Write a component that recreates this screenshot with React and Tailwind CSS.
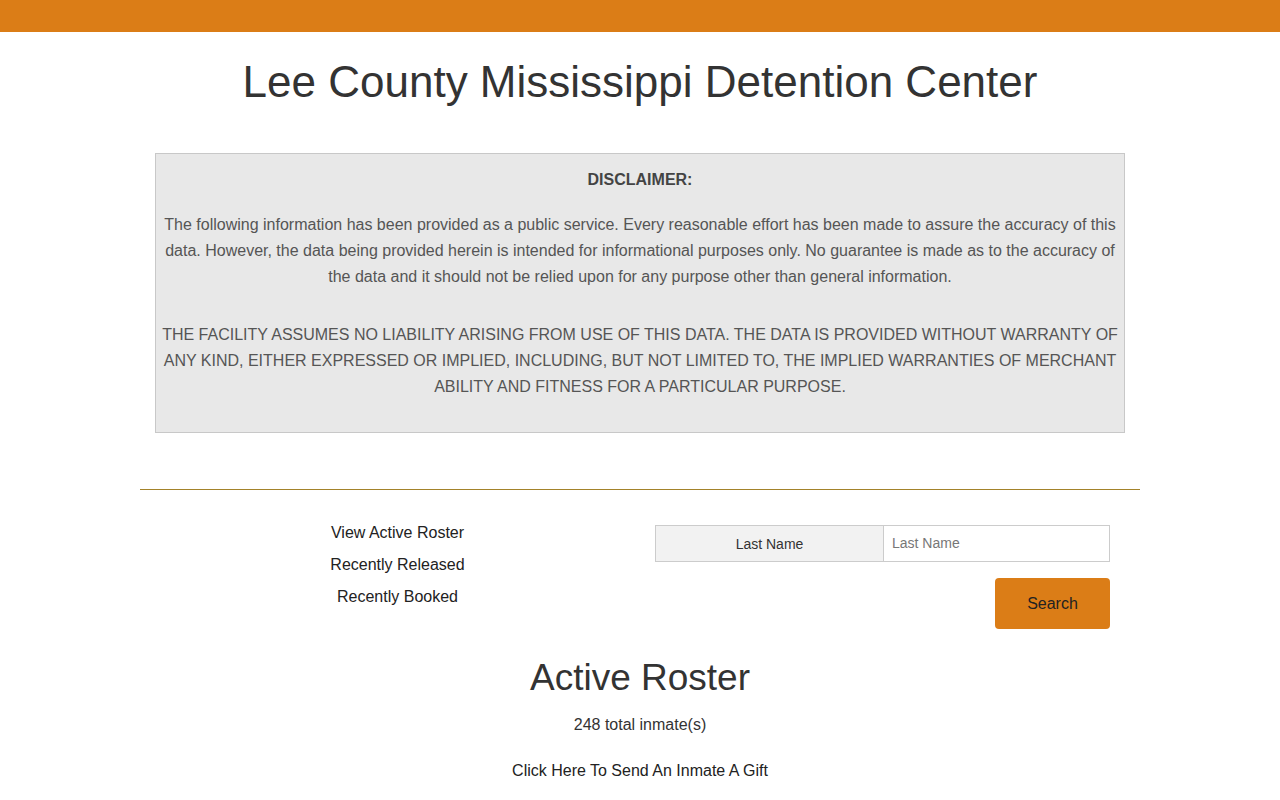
import React from "react";

export default function App() {
  const links = ["View Active Roster", "Recently Released", "Recently Booked"];

  return (
    <div className="min-h-screen bg-white text-[#333] font-['Liberation_Sans',Arial,sans-serif]">
      {/* top bar */}
      <div className="h-8 bg-[#db7d17]" />

      {/* title */}
      <h1 className="text-center text-[44px] leading-[50px] pt-[25px] text-[#333]">
        Lee County Mississippi Detention Center
      </h1>

      {/* disclaimer */}
      <div className="mx-auto mt-[46px] w-[970px] border border-[#c8c8c8] bg-[#e8e8e8] px-[5px] pt-[13px] pb-[32px] text-center text-base leading-[26px] text-[#555]">
        <p className="font-bold text-[#444]">DISCLAIMER:</p>
        <p className="mt-[19px]">
          The following information has been provided as a public service. Every reasonable effort has been made to assure
          the accuracy of this data. However, the data being provided herein is intended for informational purposes only. No
          guarantee is made as to the accuracy of the data and it should not be relied upon for any purpose other than general
          information.
        </p>
        <p className="mt-[32px]">
          THE FACILITY ASSUMES NO LIABILITY ARISING FROM USE OF THIS DATA. THE DATA IS PROVIDED WITHOUT WARRANTY OF ANY KIND,
          EITHER EXPRESSED OR IMPLIED, INCLUDING, BUT NOT LIMITED TO, THE IMPLIED WARRANTIES OF MERCHANT ABILITY AND FITNESS FOR
          A PARTICULAR PURPOSE.
        </p>
      </div>

      {/* divider */}
      <div className="mx-auto mt-[56px] h-px w-[1000px] bg-[#a3822a]" />

      {/* links + search */}
      <div className="mx-auto mt-[35px] flex w-[1000px]">
        <div className="-mt-[8px] flex w-1/2 flex-col items-center pl-[15px] text-base leading-[32px] text-[#222]">
          {links.map((l) => (
            <a key={l} href="#" className="block">
              {l}
            </a>
          ))}
        </div>
        <div className="w-1/2 pl-[15px] pr-[30px]">
          <div className="flex h-[37px] border border-[#ccc]">
            <div className="flex w-[228px] items-center justify-center border-r border-[#ccc] bg-[#f2f2f2] pt-px text-sm text-[#333]">
              Last Name
            </div>
            <input
              type="text"
              placeholder="Last Name"
              className="flex-1 px-2 pb-[2px] text-sm text-[#555] placeholder:text-[#777] outline-none"
            />
          </div>
          <div className="mt-[16px] flex justify-end">
            <button className="h-[51px] w-[115px] rounded-[4px] bg-[#db7d17] text-base text-[#222]">
              Search
            </button>
          </div>
        </div>
      </div>

      {/* roster */}
      <div className="text-center">
        <h2 className="mt-[27px] text-[37px] leading-[44px] text-[#333]">Active Roster</h2>
        <p className="mt-[14px] text-base leading-[22px] text-[#333]">248 total inmate(s)</p>
        <p className="mt-[24px] text-base leading-[22px] text-[#222]">
          <a href="#">Click Here To Send An Inmate A Gift</a>
        </p>
      </div>
    </div>
  );
}
